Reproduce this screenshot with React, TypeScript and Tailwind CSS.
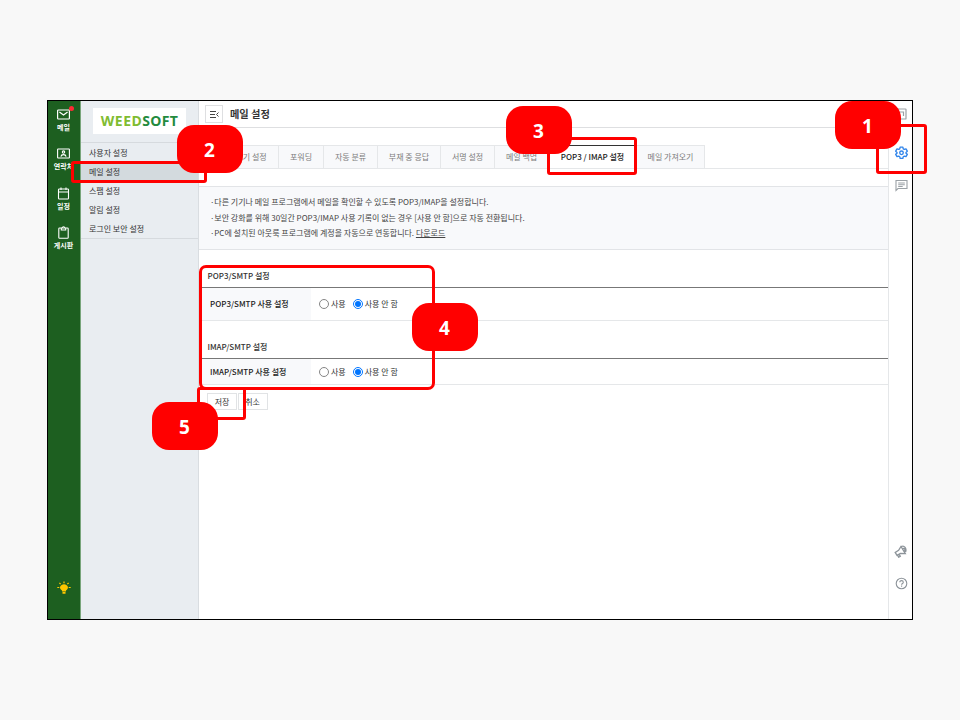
import React from 'react'

interface CalloutProps {
  label: string
  box: string
  badge: string
}

const callouts: CalloutProps[] = [
  {
    label: '1',
    box: 'left-[876px] top-[124px] w-[51px] h-[50px] rounded-[3px]',
    badge: 'left-[835px] top-[101px]',
  },
  {
    label: '2',
    box: 'left-[71px] top-[161px] w-[136px] h-[22px] rounded-[3px]',
    badge: 'left-[177px] top-[125px]',
  },
  {
    label: '3',
    box: 'left-[547px] top-[137px] w-[90px] h-[38px] rounded-[3px]',
    badge: 'left-[506px] top-[106px]',
  },
  {
    label: '4',
    box: 'left-[199px] top-[265px] w-[236px] h-[125px] rounded-[7px]',
    badge: 'left-[412px] top-[303px]',
  },
  {
    label: '5',
    box: 'left-[197px] top-[387px] w-[49px] h-[33px] rounded-[3px]',
    badge: 'left-[152px] top-[402px]',
  },
]

const Callout = ({ label, box, badge }: CalloutProps) => (
  <>
    <div className={`absolute border-[3px] border-[#ff0000] ${box}`} />
    <div
      className={`absolute flex h-12 w-[66px] items-center justify-center rounded-[17px] bg-[#ff0000] pt-[3px] pr-px font-['Open_Sans','Noto_Sans',sans-serif] text-[19px] font-bold text-white ${badge}`}
    >
      {label}
    </div>
  </>
)

const MailIcon = () => (
  <svg width="13" height="11" viewBox="0 0 13 11" fill="none" stroke="white" strokeWidth="1.2">
    <rect x="0.6" y="1" width="11.8" height="9" rx="0.8" />
    <path d="M2.4 3 6.5 6l4.100-3" />
  </svg>
)

const ContactIcon = () => (
  <svg width="13" height="11" viewBox="0 0 13 11" fill="none" stroke="white" strokeWidth="1.1">
    <rect x="0.6" y="1" width="11.8" height="9" rx="0.5" />
    <circle cx="6.5" cy="4.1" r="1.200" />
    <path d="M3.900 8.600c.4-2.700 4.800-2.700 5.200 0" />
  </svg>
)

const CalendarIcon = () => (
  <svg width="13" height="13" viewBox="0 0 13 13" fill="none" stroke="white" strokeWidth="1.1">
    <rect x="1.500" y="2" width="10" height="10" rx="0.8" />
    <path d="M1.500 5h10M4 .5v2.500M9 .5v2.500" />
  </svg>
)

const BoardIcon = () => (
  <svg width="13" height="13" viewBox="0 0 13 13" fill="none" stroke="white" strokeWidth="1.1">
    <rect x="1.800" y="2" width="9.400" height="10.300" rx="0.8" />
    <path d="M4.300 2v2h4.400V2M5.200 2c0-1.700 2.600-1.700 2.600 0" />
  </svg>
)

const BulbIcon = () => (
  <svg width="14" height="14" viewBox="0 0 14 14" fill="#ffc800" stroke="#ffc800">
    <path
      d="M5 10.400V9.500C1.300 7.200 3.400 3.200 7 3.200s5.700 4 2 6.300v.9zM5.500 11h3v1.700h-3z"
      stroke="none"
    />
    <path d="M7 .5v1.700M2.400 1.900l1.200 1.200M11.600 1.900l-1.200 1.200M.3 6.500h2M11.700 6.500h2" strokeWidth="1.2" />
  </svg>
)

const navItems = [
  { label: '메일', icon: <MailIcon />, unread: true },
  { label: '연락처', icon: <ContactIcon /> },
  { label: '일정', icon: <CalendarIcon /> },
  { label: '게시판', icon: <BoardIcon /> },
]

const NavRail = () => (
  <nav className="flex w-[33px] shrink-0 flex-col items-center border-r border-[#78a57b] bg-[#1d5f20] pt-[5px] pr-px">
    {navItems.map((item) => (
      <div key={item.label} className="flex h-[39.300px] flex-col items-center whitespace-nowrap">
        <div className="relative flex h-[17px] items-center">
          {item.icon}
          {item.unread && (
            <span className="absolute -right-[4px] top-0 size-[5px] rounded-full bg-[#ff2a35]" />
          )}
        </div>
        <span className="text-[7px] leading-[9px] font-bold text-white">{item.label}</span>
      </div>
    ))}
    <div className="mt-auto mb-[24px]">
      <BulbIcon />
    </div>
  </nav>
)

const menu = ['사용자 설정', '메일 설정', '스팸 설정', '알림 설정', '로그인 보안 설정']

const Sidebar = () => (
  <aside className="flex w-[118px] shrink-0 flex-col border-r border-[#d9dde1] bg-[#e9edf1]">
    <div className="mt-[7px] ml-3 flex h-[26px] w-[93px] items-center justify-center bg-white pb-[2px] font-['Open_Sans',sans-serif] text-[14px] font-bold">
      <span className="tracking-[0.5px] text-[#80bc31]">WEED</span>
      <span className="tracking-[0.3px] text-[#238b3e]">SOFT</span>
    </div>
    <ul className="mt-2 h-[97px] border-y border-[#d6dade] text-[8px] leading-[19px] text-[#333]">
      {menu.map((item) => (
        <li
          key={item}
          className={`h-[19px] pl-2 ${item === '메일 설정' ? 'bg-[#d3dade]' : ''}`}
        >
          {item}
        </li>
      ))}
    </ul>
  </aside>
)

const tabs = [
  { label: '쓰기 설정', width: 'w-[72px] pl-[17px]' },
  { label: '포워딩', width: 'w-[45px]' },
  { label: '자동 분류', width: 'w-[54px]' },
  { label: '부재 중 응답', width: 'w-[63px]' },
  { label: '서명 설정', width: 'w-[54px]' },
  { label: '메일 백업', width: 'w-[54px]' },
  { label: 'POP3 / IMAP 설정', width: 'w-[88px]', active: true },
  { label: '메일 가져오기', width: 'w-[68px]' },
]

const Tabs = () => (
  <div className="flex h-[24px] border-b border-[#e5e7e9] pl-2 text-[8px]">
    {tabs.map((tab) => (
      <div
        key={tab.label}
        className={`flex shrink-0 items-center justify-center whitespace-nowrap border-t border-r border-r-[#e5e7e9] ${tab.width} ${
          tab.active
            ? 'border-t-[#333] bg-white font-medium text-[#222]'
            : 'border-t-[#e5e7e9] bg-[#f8f9fb] text-[#7c7c7c]'
        }`}
      >
        {tab.label}
      </div>
    ))}
  </div>
)

const Radio = ({ checked, label }: { checked?: boolean; label: string }) => (
  <label className="flex items-center gap-[2px]">
    <span
      className={`flex size-[10px] items-center justify-center rounded-full border bg-white ${
        checked ? 'border-[#0075ff]' : 'border-[#858585]'
      }`}
    >
      {checked && <span className="size-[6px] rounded-full bg-[#0075ff]" />}
    </span>
    {label}
  </label>
)

interface SectionProps {
  protocol: string
  row: string
}

const Section = ({ protocol, row }: SectionProps) => (
  <section>
    <h2 className="h-[21px] pl-[8.500px] text-[8px] leading-[19px] font-medium text-[#333]">
      {protocol} 설정
    </h2>
    <div className={`flex border-t border-t-[#777] border-b border-b-[#e5e7e9] text-[8px] ${row}`}>
      <div className="flex w-[112px] items-center bg-[#f8f9fb] pl-[11px] font-medium text-[#222]">
        {protocol} 사용 설정
      </div>
      <div className="flex items-center gap-[7px] pl-2 text-[#333]">
        <Radio label="사용" />
        <Radio label="사용 안 함" checked />
      </div>
    </div>
  </section>
)

const notices = [
  '다른 기기나 메일 프로그램에서 메일을 확인할 수 있도록 POP3/IMAP을 설정합니다.',
  '보안 강화를 위해 30일간 POP3/IMAP 사용 기록이 없는 경우 [사용 안 함]으로 자동 전환됩니다.',
  'PC에 설치된 아웃룩 프로그램에 계정을 자동으로 연동합니다.',
]

const Content = () => (
  <main className="flex min-w-0 flex-1 flex-col bg-white">
    <header className="flex h-[27px] items-center gap-[7px] border-b border-[#dedfe1] pl-[6px]">
      <div className="flex size-[18px] items-center justify-center border border-[#dedfe1]">
        <svg width="9" height="8" viewBox="0 0 9 8" fill="none" stroke="#444">
          <path d="M0 1.500h6M0 4.500h5M0 7.500h6" />
          <path d="M8.500 2.500 6.500 4.500l2 2" />
        </svg>
      </div>
      <h1 className="text-[10.200px] font-bold text-[#333]">메일 설정</h1>
    </header>
    <div className="mt-[17px]">
      <Tabs />
    </div>
    <ul className="mt-[17px] h-[64px] border-y border-[#e2e4e7] bg-[#f8f9fb] pt-[7px] pl-[11px] text-[8px] leading-[15.700px] text-[#444]">
      {notices.map((notice, index) => (
        <li key={notice}>
          <span className="-mr-[2px]">·</span> {notice}
          {index === 2 && (
            <>
              {' '}
              <span className="underline">다운로드</span>
            </>
          )}
        </li>
      ))}
    </ul>
    <div className="mt-[16px] flex flex-col gap-[16px]">
      <Section protocol="POP3/SMTP" row="h-[34px]" />
      <Section protocol="IMAP/SMTP" row="h-[27px]" />
    </div>
    <div className="mt-[8px] flex gap-px pl-2 text-[8px] text-[#333]">
      <button className="h-[17px] w-[30px] border border-[#e1e3e5]">저장</button>
      <button className="h-[17px] w-[30px] border border-[#e1e3e5] pr-px">취소</button>
    </div>
  </main>
)

const ToolRail = () => (
  <aside className="flex w-6 shrink-0 flex-col items-center border-l border-[#e5e7e9] bg-white pt-[7px] pl-[2px]">
    <svg width="12" height="12" viewBox="0 0 12 12" fill="none" stroke="#9ba1a6" strokeWidth="1.200">
      <rect x="0" y="1" width="10" height="10" rx="0.6" />
      <path d="M4 4h3.500v4" />
    </svg>
    <svg
      className="mt-[26px]"
      width="13"
      height="13"
      viewBox="0 0 24 24"
      fill="none"
      stroke="#3285ea"
      strokeWidth="2.500"
      strokeLinejoin="round"
    >
      <path d="M9.500 2h5l.7 3.200 2 1.100 3.100-1 2.400 4.300-2.400 2.200v1.400l2.400 2.200-2.400 4.300-3.100-1-2 1.100-.7 3.200h-5l-.7-3.200-2-1.100-3.100 1-2.400-4.300 2.400-2.200v-1.400L1.300 9.600l2.400-4.300 3.100 1 2-1.100z" />
      <circle cx="12" cy="12.500" r="3.300" />
    </svg>
    <svg
      className="mt-[20px]"
      width="13"
      height="13"
      viewBox="0 0 13 13"
      fill="none"
      stroke="#9ba1a6"
      strokeWidth="1.100"
    >
      <path d="M1 11.500V1.500h11v8H3zM3.200 4h6.600M3.200 5.800h6.600M3.200 7.500h4.500" />
    </svg>
    <svg
      className="mt-auto mr-[2px]"
      width="13"
      height="13"
      viewBox="0 0 13 13"
      fill="none"
      stroke="#8d949a"
      strokeWidth="1.300"
    >
      <path d="M7 1.500 11.300 8.600 6.500 8.400 3 10.300 1.200 7.400 4.600 5.300zM3.500 10.200l1.200 2 1.600-.9-1.100-1.900M8.900 3.500c1.700-.5 2.800 1.300 1.500 2.700M7.500 1.500c2.700-1.400 5.500 2 4 5.500" />
    </svg>
    <svg
      className="mt-[19px] mb-[29px]"
      width="13"
      height="13"
      viewBox="0 0 13 13"
      fill="none"
      stroke="#8d949a"
      strokeWidth="1.100"
    >
      <circle cx="6.500" cy="6.500" r="5.300" />
      <path d="M4.800 5.300c0-2.300 3.500-2.200 3.500-.1 0 1.300-1.700 1.200-1.700 2.500M6.600 8.600v1.200" />
    </svg>
  </aside>
)

const App = () => {
  return (
    <div className="relative h-[720px] w-[960px] overflow-hidden bg-[#f8f8f8] pt-[100px] pl-[47px] font-['Noto_Sans_CJK_KR',sans-serif]">
      <div className="flex h-[520px] w-[866px] border border-black">
        <NavRail />
        <Sidebar />
        <Content />
        <ToolRail />
      </div>
      {callouts.map((callout) => (
        <Callout key={callout.label} {...callout} />
      ))}
    </div>
  )
}

export default App
